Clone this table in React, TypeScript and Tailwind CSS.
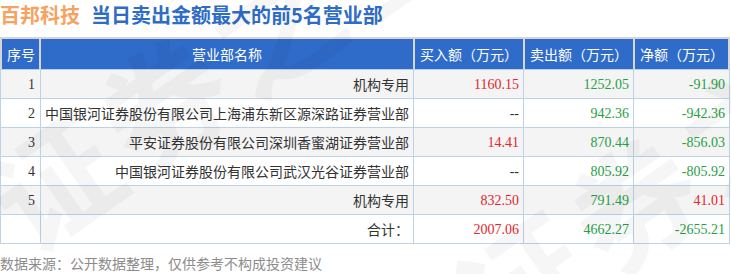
const rows = [
    { no: "1", name: "机构专用", buy: "1160.15", sell: "1252.05", net: "-91.90", buyUp: true, netUp: false },
    { no: "2", name: "中国银河证券股份有限公司上海浦东新区源深路证券营业部", buy: "--", sell: "942.36", net: "-942.36", buyUp: false, netUp: false },
    { no: "3", name: "平安证券股份有限公司深圳香蜜湖证券营业部", buy: "14.41", sell: "870.44", net: "-856.03", buyUp: true, netUp: false },
    { no: "4", name: "中国银河证券股份有限公司武汉光谷证券营业部", buy: "--", sell: "805.92", net: "-805.92", buyUp: false, netUp: false },
    { no: "5", name: "机构专用", buy: "832.50", sell: "791.49", net: "41.01", buyUp: true, netUp: true },
    { no: "", name: "合计：", buy: "2007.06", sell: "4662.27", net: "-2655.21", buyUp: true, netUp: false },
];

const cjk = { fontFamily: '"Noto Sans CJK SC", "Noto Sans", sans-serif' };
const serif = { fontFamily: '"Liberation Serif", "Noto Sans CJK SC", serif' };

export default function App() {
    return (
        <div className="relative w-[731px] h-[274px] bg-white overflow-hidden" style={cjk}>
            {/* Title */}
            <div className="h-[37px] flex items-start pt-[1px] text-[20px] leading-[28px] font-bold">
                <span className="text-[#f5a35e]">百邦科技</span>
                <span className="ml-[11px] text-[#2e6cc6]">当日卖出金额最大的前5名营业部</span>
            </div>

            {/* Header */}
            <div className="flex w-[730px] h-[32px] bg-[#d6d6d6] pl-[2px] pt-[2px] gap-[2px] text-white text-[14px]">
                <div className="w-[37px] bg-[#2f6bc9] flex items-center pl-[5px]">序号</div>
                <div className="w-[372px] bg-[#2f6bc9] flex items-center justify-center">营业部名称</div>
                <div className="w-[108px] bg-[#2f6bc9] flex items-center pl-[5px]">买入额（万元）</div>
                <div className="w-[108px] bg-[#2f6bc9] flex items-center pl-[5px]">卖出额（万元）</div>
                <div className="w-[93px] bg-[#2f6bc9] flex items-center pl-[5px]">净额（万元）</div>
            </div>

            {/* Body */}
            <div className="w-[730px] border-l border-t border-[#bcd2ea] text-[14px] text-[#333]">
                {rows.map((r, i) => (
                    <div
                        key={i}
                        className={`grid grid-cols-[40px_373px_110px_110px_96px] h-[29px] border-b border-[#bcd2ea] ${i % 2 === 0 ? "bg-[#f4f4f4]" : "bg-white"}`}
                    >
                        <div className="border-r border-[#bcd2ea] flex items-center justify-end pr-[5px]" style={serif}>
                            {r.no}
                        </div>
                        <div className="border-r border-[#bcd2ea] flex items-center justify-end pr-[4px]">{r.name}</div>
                        <div
                            className={`border-r border-[#bcd2ea] flex items-center justify-end pr-[4px] ${r.buyUp ? "text-[#e3262d]" : "text-[#333]"}`}
                            style={serif}
                        >
                            {r.buy}
                        </div>
                        <div className="border-r border-[#bcd2ea] flex items-center justify-end pr-[4px] text-[#27a046]" style={serif}>
                            {r.sell}
                        </div>
                        <div
                            className={`border-r border-[#bcd2ea] flex items-center justify-end pr-[4px] ${r.netUp ? "text-[#e3262d]" : "text-[#27a046]"}`}
                            style={serif}
                        >
                            {r.net}
                        </div>
                    </div>
                ))}
            </div>

            {/* Footer */}
            <div className="mt-[9px] text-[14px] leading-[20px] text-[#8c8c8c]">数据来源：公开数据整理，仅供参考不构成投资建议</div>

            {/* Watermark */}
            <div
                aria-hidden
                className="absolute left-[0px] top-[150px] -rotate-[35deg] origin-left pointer-events-none select-none text-[125px] font-bold leading-none text-black/[0.035] whitespace-nowrap tracking-[10px]"
            >
                证券之星
            </div>
            <div
                aria-hidden
                className="absolute left-[470px] top-[250px] -rotate-[35deg] origin-left pointer-events-none select-none text-[125px] font-bold leading-none text-black/[0.035] whitespace-nowrap tracking-[10px]"
            >
                证券之星
            </div>
        </div>
    );
}
